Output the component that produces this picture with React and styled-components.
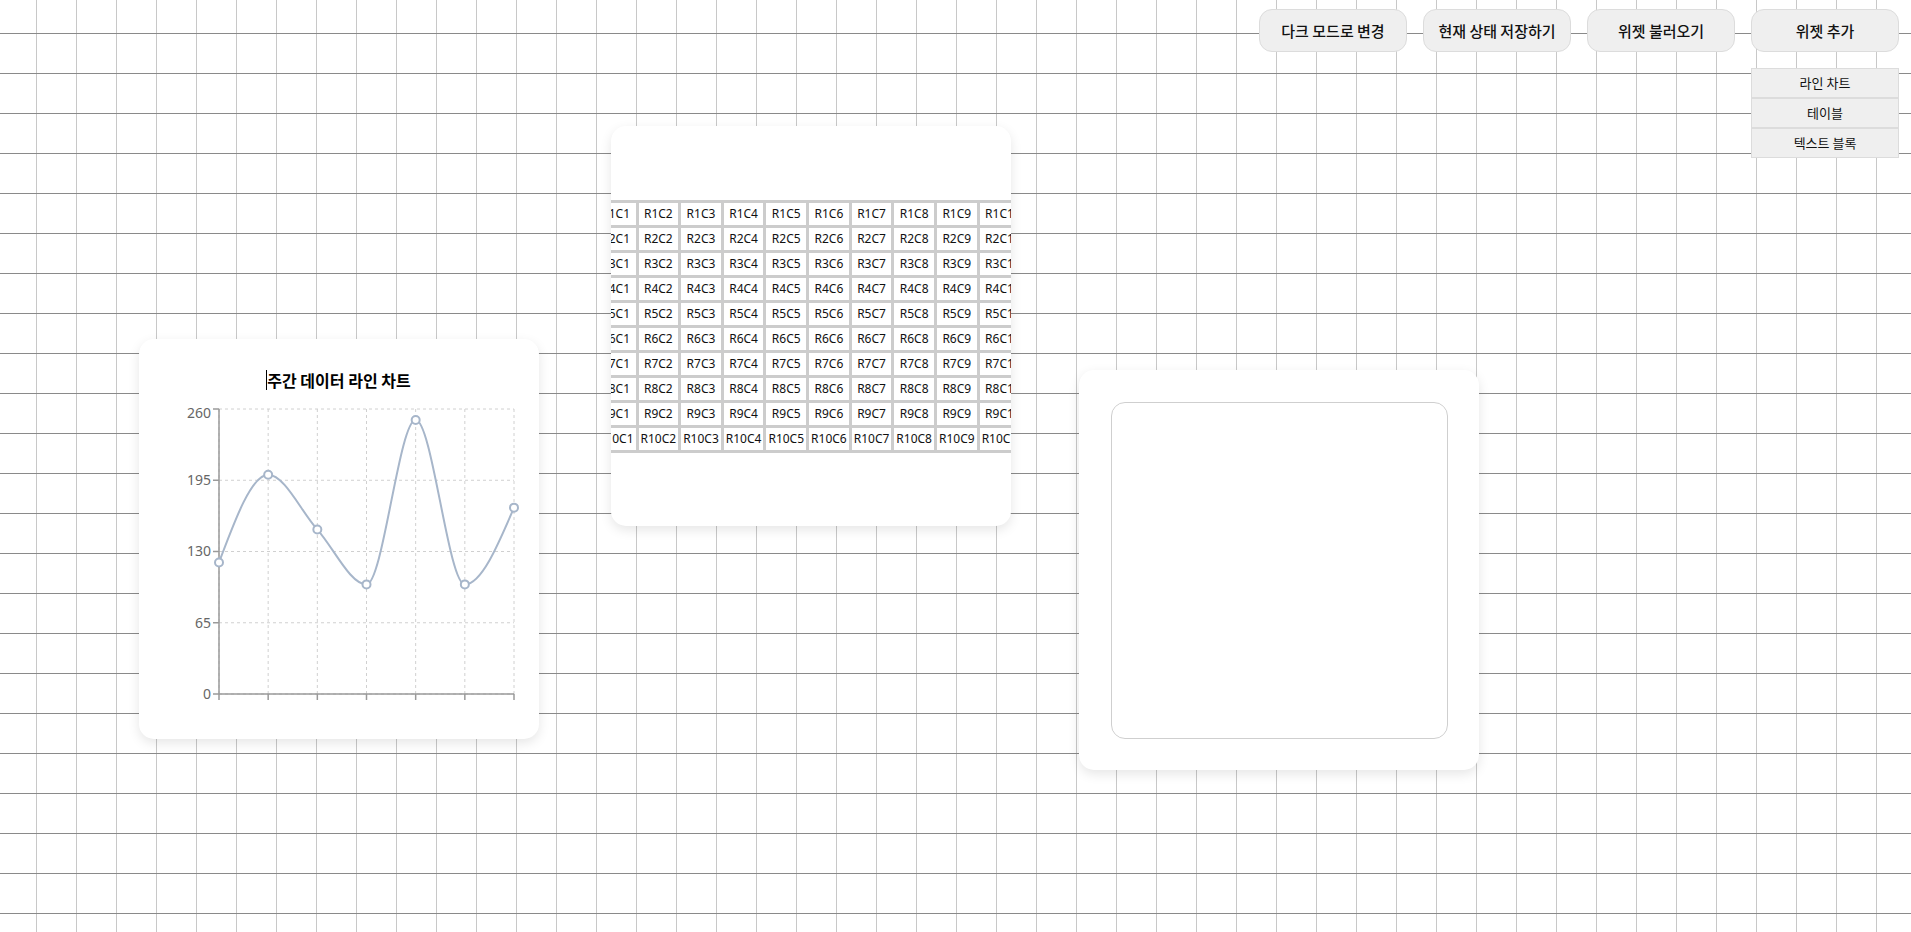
import React from "react";
import styled, { createGlobalStyle } from "styled-components";

const GlobalStyle = createGlobalStyle`
  html, body { margin: 0; padding: 0; }
  body {
    font-family: "Noto Sans", "Noto Sans CJK KR", sans-serif;
    color: #111;
    background: #fff;
  }
  * { box-sizing: border-box; }
`;

const Canvas = styled.div`
  position: relative;
  width: 100%;
  height: 100vh;
  overflow: hidden;
  background-color: #ffffff;
  background-image:
    linear-gradient(to bottom, #8a8a8a 1px, transparent 1px),
    linear-gradient(to right, #c8c8c8 1px, transparent 1px);
  background-size: 40px 40px, 40px 40px;
  background-position: 0 33px, 36px 0;
`;

const Toolbar = styled.div`
  display: flex;
  justify-content: flex-end;
  gap: 16px;
  padding: 9px 12px 0 0;
  position: relative;
  z-index: 5;
`;

const ToolButton = styled.button`
  width: 148px;
  height: 43px;
  background: #efefef;
  border: 1px solid #dcdcdc;
  border-radius: 13px;
  font-family: "Noto Sans CJK KR", "Noto Sans", sans-serif;
  font-size: 15px;
  font-weight: 500;
  color: #111;
  cursor: pointer;
  padding: 0;
`;

const MenuAnchor = styled.div`
  position: relative;
`;

const Menu = styled.div`
  position: absolute;
  top: calc(100% + 16px);
  left: 0;
  width: 100%;
  display: flex;
  flex-direction: column;
`;

const MenuItem = styled.div`
  background: #efefef;
  border: 1px solid #dcdcdc;
  padding: 5px 0;
  line-height: 18px;
  text-align: center;
  font-family: "Noto Sans CJK KR", "Noto Sans", sans-serif;
  font-size: 13px;
  color: #111;
`;

const Widget = styled.div`
  position: absolute;
  left: ${(p) => p.$x}px;
  top: ${(p) => p.$y}px;
  width: 400px;
  height: 400px;
  background: #fff;
  border-radius: 15px;
  box-shadow: 0 4px 12px rgba(0, 0, 0, 0.1);
  overflow: hidden;
`;

const ChartCard = styled(Widget)`
  display: flex;
  flex-direction: column;
  align-items: center;
`;

const TitleRow = styled.div`
  margin-top: 31px;
  height: 20px;
  display: flex;
  align-items: center;
  font-family: "Noto Sans CJK KR", sans-serif;
  font-weight: 700;
  font-size: 16px;
  color: #000;
  position: relative;
`;

const Caret = styled.span`
  position: absolute;
  left: -1px;
  top: 0;
  width: 1px;
  height: 20px;
  background: #000;
`;

const ChartSvg = styled.svg`
  display: block;
  margin-top: 9px;
`;

const TableCard = styled(Widget)`
  display: flex;
  align-items: center;
  justify-content: center;
`;

const Grid = styled.table`
  flex-shrink: 0;
  border-collapse: collapse;
  font-family: "Noto Sans", sans-serif;
  font-size: 12px;
  color: #111;
`;

const Cell = styled.td`
  border: 3px solid #cccccc;
  padding: 3px 2px;
  line-height: 16px;
  text-align: center;
  white-space: nowrap;
`;

const TextCard = styled(Widget)`
  padding: 32px 31px 31px 32px;
`;

const TextArea = styled.textarea`
  display: block;
  width: 100%;
  height: 100%;
  border: 1px solid #cfcfcf;
  border-radius: 14px;
  resize: none;
  outline: none;
  font-family: "Noto Sans CJK KR", sans-serif;
  font-size: 14px;
  padding: 10px;
  background: #fff;
`;

const data = [120, 200, 150, 100, 250, 100, 170];

function monotonePath(pts) {
  const n = pts.length;
  const sign = (v) => (v < 0 ? -1 : 1);
  const t = new Array(n).fill(0);
  for (let i = 1; i < n - 1; i++) {
    const [x0, y0] = pts[i - 1];
    const [x1, y1] = pts[i];
    const [x2, y2] = pts[i + 1];
    const h0 = x1 - x0;
    const h1 = x2 - x1;
    const s0 = (y1 - y0) / h0;
    const s1 = (y2 - y1) / h1;
    const p = (s0 * h1 + s1 * h0) / (h0 + h1);
    t[i] = (sign(s0) + sign(s1)) * Math.min(Math.abs(s0), Math.abs(s1), 0.5 * Math.abs(p)) || 0;
  }
  {
    const h = pts[1][0] - pts[0][0];
    t[0] = (3 * (pts[1][1] - pts[0][1]) / h - t[1]) / 2;
    const hl = pts[n - 1][0] - pts[n - 2][0];
    t[n - 1] = (3 * (pts[n - 1][1] - pts[n - 2][1]) / hl - t[n - 2]) / 2;
  }
  let d = `M${pts[0][0]},${pts[0][1]}`;
  for (let i = 0; i < n - 1; i++) {
    const [x0, y0] = pts[i];
    const [x1, y1] = pts[i + 1];
    const dx = (x1 - x0) / 3;
    d += `C${x0 + dx},${y0 + dx * t[i]},${x1 - dx},${y1 - dx * t[i + 1]},${x1},${y1}`;
  }
  return d;
}

function LineChart() {
  const left = 80;
  const right = 375;
  const top = 10;
  const bottom = 295;
  const max = 260;
  const yOf = (v) => bottom - (v / max) * (bottom - top);
  const step = (right - left) / (data.length - 1);
  const pts = data.map((v, i) => [left + i * step, yOf(v)]);
  const yTicks = [0, 65, 130, 195, 260];
  const lineColor = "#a7b6ca";
  return (
    <ChartSvg width="400" height="320" viewBox="0 0 400 320">
      <g stroke="#d0d0d0" strokeDasharray="3 3" strokeWidth="1" fill="none">
        {yTicks.map((v) => (
          <line key={"h" + v} x1={left} x2={right} y1={yOf(v)} y2={yOf(v)} />
        ))}
        {pts.map(([x], i) => (
          <line key={"v" + i} x1={x} x2={x} y1={top} y2={bottom} />
        ))}
      </g>
      <g stroke="#9a9a9a" strokeWidth="1.5" fill="none">
        <line x1={left} x2={left} y1={top} y2={bottom} />
        <line x1={left} x2={right} y1={bottom} y2={bottom} />
        {yTicks.map((v) => (
          <line key={"yt" + v} x1={left - 6} x2={left} y1={yOf(v)} y2={yOf(v)} />
        ))}
        {pts.map(([x], i) => (
          <line key={"xt" + i} x1={x} x2={x} y1={bottom} y2={bottom + 6} />
        ))}
      </g>
      <g fill="#666" fontFamily="Noto Sans, sans-serif" fontSize="14" textAnchor="end">
        {yTicks.map((v) => (
          <text key={"l" + v} x={left - 8} y={yOf(v) + (v === 260 ? 4 : 0)} dy="0.355em">
            {v}
          </text>
        ))}
      </g>
      <path d={monotonePath(pts)} fill="none" stroke={lineColor} strokeWidth="2" />
      {pts.map(([x, y], i) => (
        <circle key={"c" + i} cx={x} cy={y} r="4" fill="#fff" stroke={lineColor} strokeWidth="2" />
      ))}
    </ChartSvg>
  );
}

const rows = Array.from({ length: 10 }, (_, r) => r + 1);
const cols = Array.from({ length: 10 }, (_, c) => c + 1);

export default function App() {
  return (
    <>
      <GlobalStyle />
      <Canvas>
        <Toolbar>
          <ToolButton>다크 모드로 변경</ToolButton>
          <ToolButton>현재 상태 저장하기</ToolButton>
          <ToolButton>위젯 불러오기</ToolButton>
          <MenuAnchor>
            <ToolButton>위젯 추가</ToolButton>
            <Menu>
              <MenuItem>라인 차트</MenuItem>
              <MenuItem>테이블</MenuItem>
              <MenuItem>텍스트 블록</MenuItem>
            </Menu>
          </MenuAnchor>
        </Toolbar>

        <ChartCard $x={139} $y={339}>
          <TitleRow>
            <Caret />
            주간 데이터 라인 차트
          </TitleRow>
          <LineChart />
        </ChartCard>

        <TableCard $x={611} $y={126}>
          <Grid>
            <tbody>
              {rows.map((r) => (
                <tr key={r}>
                  {cols.map((c) => (
                    <Cell key={c}>{`R${r}C${c}`}</Cell>
                  ))}
                </tr>
              ))}
            </tbody>
          </Grid>
        </TableCard>

        <TextCard $x={1079} $y={370}>
          <TextArea />
        </TextCard>
      </Canvas>
    </>
  );
}
